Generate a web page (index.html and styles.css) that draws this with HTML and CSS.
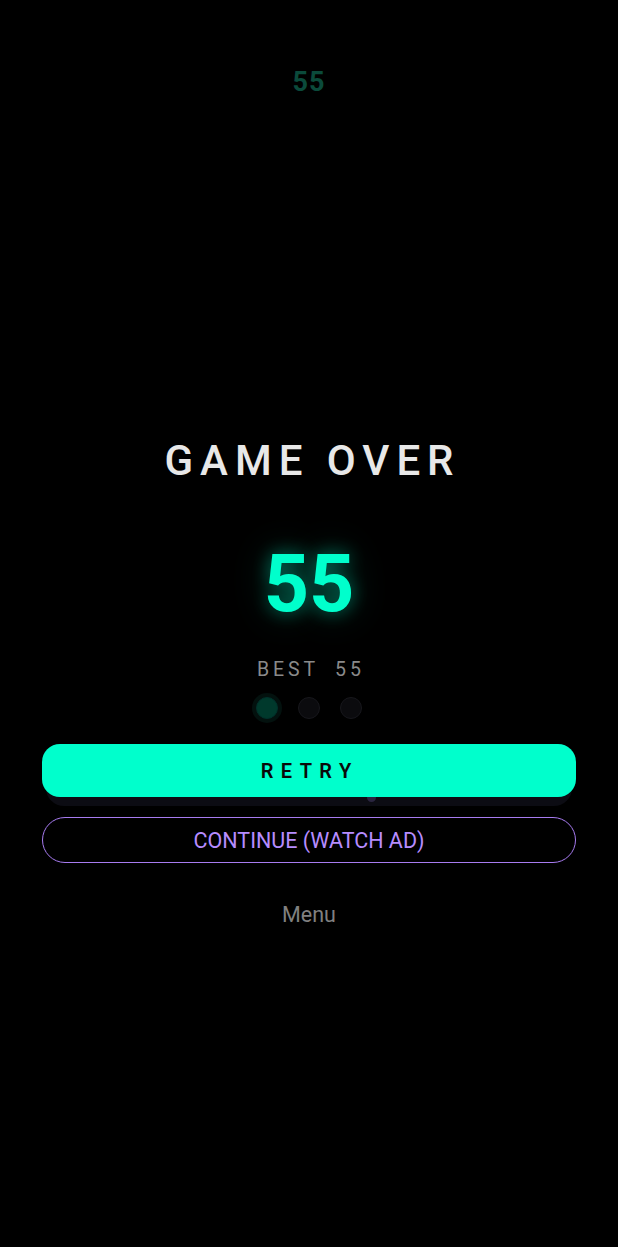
FILE: index.html
```html
<!DOCTYPE html>
<html>
<head>
<meta charset="utf-8">
<link rel="stylesheet" href="styles.css">
</head>
<body>
<div class="screen">
  <div class="hud-score">55</div>
  <div class="overlay">
    <h1 class="title">GAME OVER</h1>
    <div class="final-score">55</div>
    <div class="best"><span>BEST</span><span>55</span></div>
    <div class="dots">
      <span class="dot active"></span>
      <span class="dot"></span>
      <span class="dot"></span>
    </div>
    <div class="retry-wrap">
      <span class="ball"></span>
      <button class="btn-retry">RETRY</button>
    </div>
    <button class="btn-continue">CONTINUE (WATCH AD)</button>
    <div class="menu">Menu</div>
  </div>
</div>
</body>
</html>
```
FILE: styles.css
```css
* { box-sizing: border-box; }
html, body {
  margin: 0;
  padding: 0;
  background: #000;
}
body {
  font-family: Roboto, "Liberation Sans", sans-serif;
  width: 618px;
  height: 1247px;
  overflow: hidden;
}
.screen {
  display: flex;
  flex-direction: column;
  align-items: center;
  padding-top: 67px;
}
.hud-score {
  font-size: 27px;
  line-height: 30px;
  font-weight: 700;
  color: #0b4a3b;
  letter-spacing: 1px;
}
.overlay {
  width: 100%;
  display: flex;
  flex-direction: column;
  align-items: center;
  padding: 0 42px;
  margin-top: 339px;
}
.title {
  margin: 0;
  font-size: 42px;
  line-height: 50px;
  font-weight: 500;
  color: #e8e8e8;
  letter-spacing: 7px;
  padding-left: 7px;
}
.final-score {
  margin-top: 53px;
  font-size: 79px;
  line-height: 90px;
  font-weight: 700;
  color: #00ffcc;
  text-shadow: 0 0 18px rgba(0, 255, 204, 0.45), 0 0 40px rgba(0, 255, 204, 0.2);
}
.best {
  margin-top: 29px;
  display: flex;
  gap: 16px;
  font-size: 19.5px;
  line-height: 24px;
  color: #8a8a8a;
  letter-spacing: 0.2em;
  padding-left: 0.2em;
}
.dots {
  margin-top: 15px;
  display: flex;
  gap: 20px;
}
.dot {
  width: 22px;
  height: 22px;
  border-radius: 50%;
  background: #0b0b0e;
  border: 1.5px solid #17171c;
}
.dot.active {
  background: #00392c;
  border-color: #00302a;
  box-shadow: 0 0 0 4px #03110e;
}
.retry-wrap {
  margin-top: 25px;
  width: 100%;
  position: relative;
}
.retry-wrap::before {
  content: "";
  position: absolute;
  left: 4px;
  right: 4px;
  top: 0;
  bottom: -9px;
  border-radius: 18px;
  background: #0c0c13;
}
.ball {
  position: absolute;
  z-index: 1;
  left: 325px;
  top: 49px;
  width: 9px;
  height: 9px;
  border-radius: 50%;
  background: #2a2540;
}
.btn-retry {
  position: relative;
  z-index: 2;
  display: block;
  width: 100%;
  height: 53px;
  border: 0;
  border-radius: 18px;
  background: #00ffcc;
  color: #0a0a0a;
  font-family: Roboto, "Liberation Sans", sans-serif;
  font-size: 20px;
  font-weight: 600;
  letter-spacing: 0.37em;
  padding-left: 0.37em;
}
.btn-continue {
  margin-top: 20px;
  display: block;
  width: 100%;
  height: 46px;
  border: 1.5px solid #a77bf0;
  border-radius: 23px;
  background: transparent;
  color: #b68cff;
  font-family: Roboto, "Liberation Sans", sans-serif;
  font-size: 21.5px;
  font-weight: 400;
}
.menu {
  margin-top: 40px;
  font-size: 21.5px;
  line-height: 24px;
  color: #808080;
}
```
